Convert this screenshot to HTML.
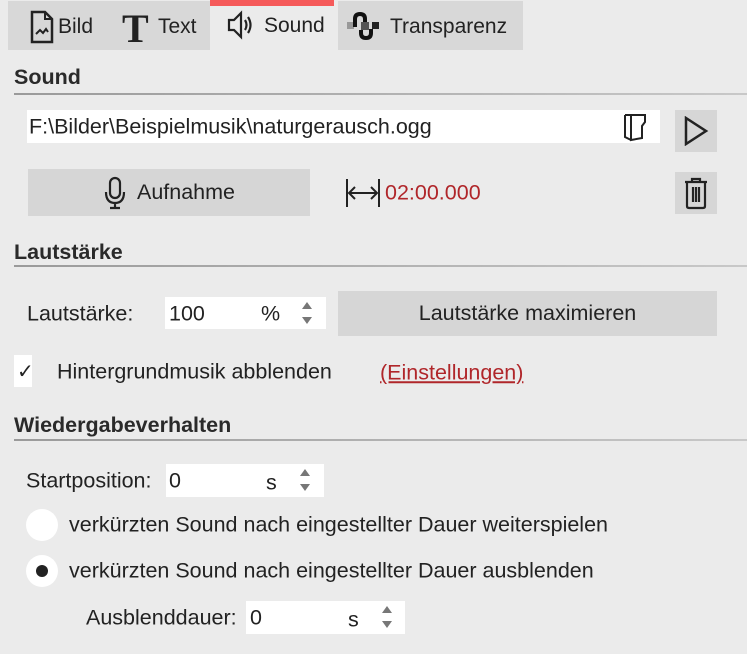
<!DOCTYPE html>
<html><head><meta charset="utf-8"><style>
*{margin:0;padding:0;box-sizing:border-box}
body{width:747px;height:654px;background:#ebebeb;font-family:"Liberation Sans",sans-serif;color:#222;position:relative;overflow:hidden;font-size:21.5px}
.a{position:absolute}
.tab{position:absolute;top:1px;height:49px;background:#d8d8d8;display:flex;align-items:center;font-size:21px}
.h{position:absolute;left:14px;font-weight:bold;font-size:21.5px;color:#2a2a2a}
.ln{position:absolute;left:14px;width:733px;height:2px;background:linear-gradient(to right,#9a9a9a,#c8c8c8)}
.w{position:absolute;background:#fff}
.btn{position:absolute;background:#d6d6d6;display:flex;align-items:center;justify-content:center}
.t{position:absolute;line-height:1;transform:translateY(-50%)}
.spin{position:absolute;width:10px}
.spin:before,.spin:after{content:"";position:absolute;left:0;border-left:5px solid transparent;border-right:5px solid transparent}
.spin:before{top:0;border-bottom:7px solid #777}
.spin:after{top:15px;border-top:7px solid #777}
.r{position:absolute;width:32px;height:32px;border-radius:50%;background:#fff}
</style></head><body>
<div class="tab" style="left:8px;width:202px">
 <svg class="a" style="left:17px;top:9px" width="30" height="34" viewBox="0 0 30 34"><path d="M7 2H20L27 9V32H7Z" fill="none" stroke="#222" stroke-width="2.5"/><path d="M20 2V9H27" fill="none" stroke="#222" stroke-width="2"/><path d="M11 24L15 20L18 23L21 19L23 22" fill="none" stroke="#222" stroke-width="2"/></svg>
 <span class="a" style="left:50px;top:14px">Bild</span>
 <span class="a" style="left:114px;top:4px;font-family:'Liberation Serif',serif;font-weight:bold;font-size:40px">T</span>
 <span class="a" style="left:150px;top:14px">Text</span>
</div>
<div class="a" style="left:210px;top:0;width:124px;height:6px;background:#f55a5a"></div>
<svg class="a" style="left:226px;top:9px" width="30" height="32" viewBox="0 0 30 32"><path d="M3 11H8L15 4V28L8 21H3Z" fill="none" stroke="#222" stroke-width="2.2"/><path d="M19 11Q22 16 19 21M22 8Q27 16 22 24" fill="none" stroke="#222" stroke-width="2.2"/></svg>
<span class="a" style="left:264px;top:14px;font-size:21px">Sound</span>
<div class="tab" style="left:338px;width:185px">
 <svg class="a" style="left:8px;top:10px" width="34" height="30" viewBox="0 0 34 30"><rect x="1" y="11" width="7" height="7" fill="#999"/><rect x="15" y="11" width="8" height="8" fill="#555"/><rect x="26" y="11" width="7" height="7" fill="#222"/><path d="M9 16V8Q9 3 14 3Q19 3 19 8V11M15 19V22Q15 27 20 27Q25 27 25 22V18" fill="none" stroke="#111" stroke-width="4"/></svg>
 <span class="a" style="left:52px;top:14px">Transparenz</span>
</div>

<div class="h" style="top:65px">Sound</div>
<div class="ln" style="top:93px"></div>
<div class="w" style="left:27px;top:110px;width:633px;height:33px"></div>
<span class="t" style="left:29px;top:127px">F:\Bilder\Beispielmusik\naturgerausch.ogg</span>
<svg class="a" style="left:622px;top:112px" width="26" height="30" viewBox="0 0 26 30"><path d="M3 3H23V10L20 14V26L9 28V3M3 3V25L9 28" fill="none" stroke="#222" stroke-width="2"/></svg>
<div class="btn" style="left:675px;top:110px;width:42px;height:42px"><svg width="26" height="30" viewBox="0 0 26 30"><path d="M3 2L23 15L3 28Z" fill="none" stroke="#222" stroke-width="2.5"/></svg></div>
<div class="btn" style="left:28px;top:169px;width:282px;height:47px"><svg width="24" height="34" viewBox="0 0 24 34" style="margin-right:10px"><rect x="7" y="2" width="10" height="20" rx="5" fill="none" stroke="#222" stroke-width="2.2"/><path d="M3 16Q3 27 12 27Q21 27 21 16M12 27V32M7 32H17" fill="none" stroke="#222" stroke-width="2.2"/></svg><span>Aufnahme</span></div>
<svg class="a" style="left:345px;top:178px" width="36" height="30" viewBox="0 0 36 30"><path d="M2 1V29M34 1V29M4 15H32M10 9L4 15L10 21M26 9L32 15L26 21" fill="none" stroke="#222" stroke-width="2"/></svg>
<span class="t" style="left:385px;top:193px;color:#b0262a">02:00.000</span>
<div class="btn" style="left:675px;top:172px;width:42px;height:42px"><svg width="26" height="34" viewBox="0 0 26 34"><path d="M2 6H24M9 6V3H17V6M4 6V30Q4 32 6 32H20Q22 32 22 30V6M10 11V26M13 11V26M16 11V26" fill="none" stroke="#222" stroke-width="2.2"/></svg></div>

<div class="h" style="top:240px">Lautstärke</div>
<div class="ln" style="top:265px"></div>
<span class="t" style="left:27px;top:314px">Lautstärke:</span>
<div class="w" style="left:165px;top:297px;width:161px;height:32px"></div>
<span class="t" style="left:169px;top:314px">100</span>
<span class="t" style="left:261px;top:314px">%</span>
<div class="spin" style="left:302px;top:302px"></div>
<div class="btn" style="left:338px;top:291px;width:379px;height:45px">Lautstärke maximieren</div>
<div class="w" style="left:14px;top:355px;width:18px;height:32px"></div>
<span class="t" style="left:17px;top:372px;font-size:20px">✓</span>
<span class="t" style="left:57px;top:372px">Hintergrundmusik abblenden</span>
<span class="t" style="left:380px;top:373px;color:#b0262a;text-decoration:underline">(Einstellungen)</span>

<div class="h" style="top:413px">Wiedergabeverhalten</div>
<div class="ln" style="top:439px"></div>
<span class="t" style="left:26px;top:481px">Startposition:</span>
<div class="w" style="left:166px;top:464px;width:158px;height:33px"></div>
<span class="t" style="left:169px;top:481px">0</span>
<span class="t" style="left:266px;top:483px">s</span>
<div class="spin" style="left:300px;top:469px"></div>
<div class="r" style="left:26px;top:509px"></div>
<span class="t" style="left:69px;top:525px">verkürzten Sound nach eingestellter Dauer weiterspielen</span>
<div class="r" style="left:26px;top:555px"></div>
<div class="a" style="left:36px;top:565px;width:12px;height:12px;border-radius:50%;background:#222"></div>
<span class="t" style="left:69px;top:571px">verkürzten Sound nach eingestellter Dauer ausblenden</span>
<span class="t" style="left:86px;top:618px">Ausblenddauer:</span>
<div class="w" style="left:246px;top:601px;width:159px;height:33px"></div>
<span class="t" style="left:250px;top:618px">0</span>
<span class="t" style="left:348px;top:620px">s</span>
<div class="spin" style="left:382px;top:606px"></div>
</body></html>
